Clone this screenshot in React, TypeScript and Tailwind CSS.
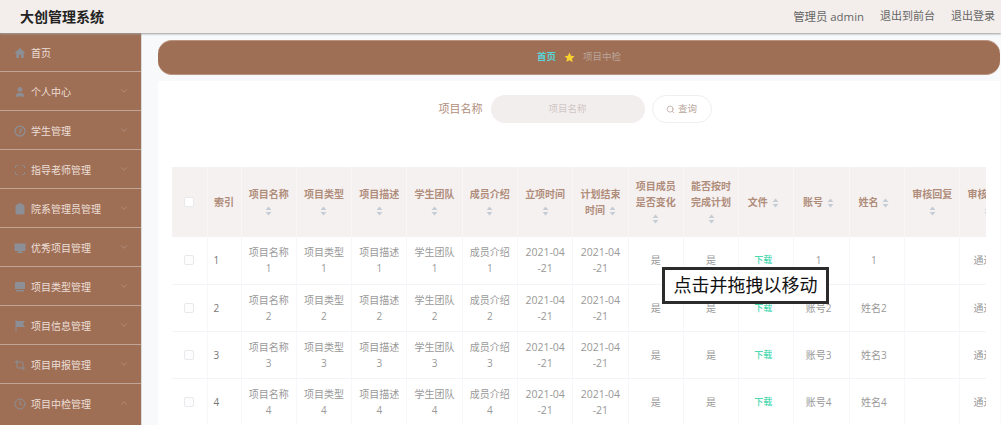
import { ChevronDown, ChevronUp, Clock, Crop, Scan, Search, User, ClipboardX } from "lucide-react";
import type { ComponentType } from "react";

type IconProps = { size?: number; className?: string };

function HomeIcon({ size, className }: IconProps) {
  return (
    <svg width={size} height={size} viewBox="0 0 24 24" className={className}>
      <path d="M12 2 L1 12.5 H4.5 V22 H10 V15.5 H14 V22 H19.5 V12.5 H23 Z" fill="currentColor" />
    </svg>
  );
}

function GaugeIcon({ size, className }: IconProps) {
  return (
    <svg width={size} height={size} viewBox="0 0 24 24" className={className} fill="none" stroke="currentColor" strokeWidth="2.5">
      <circle cx="12" cy="12" r="10" />
      <path d="M11 17 L15 7" />
    </svg>
  );
}

function MonitorIcon({ size, className }: IconProps) {
  return (
    <svg width={size} height={size} viewBox="0 0 24 24" className={className}>
      <path d="M1 3h22v15H1z M9 18h6v2h3v2H6v-2h3z" fill="currentColor" />
    </svg>
  );
}

function ScreenIcon({ size, className }: IconProps) {
  return (
    <svg width={size} height={size} viewBox="0 0 24 24" className={className}>
      <path d="M4 2h16a2 2 0 0 1 2 2v12H2V4a2 2 0 0 1 2-2z M4 18h16v3H4z" fill="currentColor" />
    </svg>
  );
}

function FlagIcon({ size, className }: IconProps) {
  return (
    <svg width={size} height={size} viewBox="0 0 24 24" className={className}>
      <path d="M3 1h2v22H3z M5 2h17l-4 6 4 6H5z" fill="currentColor" />
    </svg>
  );
}

type MenuItem = {
  label: string;
  Icon: ComponentType<any>;
  filled: boolean;
  arrow: boolean;
  open?: boolean;
};

const menu: MenuItem[] = [
  { label: "首页", Icon: HomeIcon, filled: true, arrow: false },
  { label: "个人中心", Icon: User, filled: true, arrow: true },
  { label: "学生管理", Icon: GaugeIcon, filled: false, arrow: true },
  { label: "指导老师管理", Icon: Scan, filled: false, arrow: true },
  { label: "院系管理员管理", Icon: ClipboardX, filled: true, arrow: true },
  { label: "优秀项目管理", Icon: MonitorIcon, filled: true, arrow: true },
  { label: "项目类型管理", Icon: ScreenIcon, filled: true, arrow: true },
  { label: "项目信息管理", Icon: FlagIcon, filled: true, arrow: true },
  { label: "项目申报管理", Icon: Crop, filled: false, arrow: true },
  { label: "项目中检管理", Icon: Clock, filled: false, arrow: true, open: true },
];

const headers = [
  { title: "项目名称", inline: false, shift: false },
  { title: "项目类型", inline: false, shift: false },
  { title: "项目描述", inline: false, shift: false },
  { title: "学生团队", inline: false, shift: false },
  { title: "成员介绍", inline: false, shift: false },
  { title: "立项时间", inline: false, shift: false },
  { title: "计划结束时间", inline: true, shift: false },
  { title: "项目成员是否变化", inline: false, shift: false },
  { title: "能否按时完成计划", inline: false, shift: false },
  { title: "文件", inline: true, shift: true },
  { title: "账号", inline: true, shift: true },
  { title: "姓名", inline: true, shift: true },
  { title: "审核回复", inline: false, shift: false },
  { title: "审核状态", inline: false, shift: false },
];

function SortIcon() {
  return (
    <svg width="7" height="10" viewBox="0 0 7 10" className="inline-block align-middle">
      <path d="M3.5 0.5 L6.5 4 H0.5 Z" fill="#c6ccd6" />
      <path d="M3.5 9.5 L6.5 6 H0.5 Z" fill="#c6ccd6" />
    </svg>
  );
}

function Checkbox({ head }: { head?: boolean }) {
  return <span className={`mx-auto block h-[10px] w-[10px] rounded-[2px] border border-[#e8e9ec] ${head ? "bg-white" : "bg-[#fdfdfd]"}`} />;
}

export default function App() {
  const rows = [1, 2, 3, 4];

  return (
    <div className="relative flex h-[425px] w-[1001px] flex-col overflow-hidden bg-[#f8f9fb] text-[10px] font-['Open_Sans','Noto_Sans_CJK_SC',sans-serif]">
      <header className="z-10 flex h-[33px] shrink-0 items-center justify-between bg-[#f3eeec] pl-[20px] pr-[6px] shadow-[0_1px_2px_#9c9c9c]">
        <h1 className="text-[14px] font-bold text-[#222]">大创管理系统</h1>
        <div className="flex items-center gap-[16px] text-[11px] text-[#666]">
          <span className="text-[11.4px]">管理员 admin</span>
          <span>退出到前台</span>
          <span>退出登录</span>
        </div>
      </header>

      <div className="flex min-h-0 flex-1">
        <aside className="w-[142px] shrink-0 border-r border-[#dedcdb] bg-[#9f6f55]">
          {menu.map(({ label, Icon, filled, arrow, open }, i) => (
            <div
              key={label}
              className={`flex h-[39px] items-center border-b pl-[14px] pr-[12px] pt-[2px] text-[#ecdfd8] ${i === menu.length - 1 ? "border-transparent" : "border-[#c2a596]"}`}
            >
              <Icon size={12} className="mr-[5px] shrink-0 text-[#8c8f96]" fill={filled ? "currentColor" : "none"} />
              <span className="flex-1">{label}</span>
              {arrow && (open ? <ChevronUp size={10} className="mb-[3px] text-[#b48f7c]" /> : <ChevronDown size={10} className="mb-[3px] text-[#b48f7c]" />)}
            </div>
          ))}
        </aside>

        <main className="min-w-0 flex-1 pl-[16px] pr-[1px] pt-[7px]">
          <nav className="flex h-[35px] items-center justify-center gap-[7px] rounded-[14px] border-y border-[#b99481] bg-[#9f6f55] text-[9.5px]">
            <span className="font-bold text-[#58d5d9]">首页</span>
            <svg width="11" height="11" viewBox="0 0 24 24" className="mx-[1px]"><path d="M12 1l3.4 7.2 7.6 1-5.6 5.4 1.5 7.8L12 18l-6.9 3.4 1.5-7.8L1 9.2l7.6-1z" fill="#f8d12f" /></svg>
            <span className="text-[#b9a49a]">项目中检</span>
          </nav>

          <section className="mt-[6px] h-[400px] bg-white pl-[14px] pr-[14px]">
            <div className="flex h-[86px] items-start justify-center pr-[8px] pt-[14px]">
              <label className="mr-[8px] flex h-[28px] items-center text-[11px] text-[#b08d7b]">项目名称</label>
              <div className="flex h-[28px] w-[154px] items-center justify-center rounded-[14px] bg-[#f3eeee] text-[9.5px] text-[#cfc7c5]">项目名称</div>
              <button className="ml-[7px] flex h-[28px] w-[60px] items-center justify-center gap-[3px] rounded-[14px] border border-[#f1eeee] bg-white text-[9.5px] text-[#b9a69c]">
                <Search size={9} />
                查询
              </button>
            </div>

            <div className="overflow-hidden">
              <table className="w-[843px] table-fixed border-collapse text-center text-[#999]">
                <colgroup>
                  <col className="w-[35px]" />
                  <col className="w-[34px]" />
                  {headers.map((h) => (
                    <col key={h.title} className="w-[55.3px]" />
                  ))}
                </colgroup>
                <thead>
                  <tr className="h-[70px] bg-[#f5f1f1] text-[#b08d7b]">
                    <th className="border-r border-[#f8f6f6]"><Checkbox head /></th>
                    <th className="border-r border-[#f8f6f6] font-bold">索引</th>
                    {headers.map((h) => (
                      <th key={h.title} className={`border-r border-[#f8f6f6] pl-[7px] font-bold leading-[16px] ${h.shift ? "pr-[13px]" : "pr-[7px]"}`}>
                        {h.title}
                        {!h.inline && <br />}
                        <span className={h.inline ? "ml-[4px]" : ""}><SortIcon /></span>
                      </th>
                    ))}
                  </tr>
                </thead>
                <tbody>
                  {rows.map((n) => (
                    <tr key={n} className="h-[47px] border-b border-[#f3f4f8] leading-[16px]">
                      <td className="border-r border-[#f6f7fa]"><Checkbox /></td>
                      <td className="border-r border-[#f6f7fa] pl-[6px] text-left text-[#777]">{n}</td>
                      <td className="border-r border-[#f6f7fa] px-[7px]">项目名称{n}</td>
                      <td className="border-r border-[#f6f7fa] px-[7px]">项目类型{n}</td>
                      <td className="border-r border-[#f6f7fa] px-[7px]">项目描述{n}</td>
                      <td className="border-r border-[#f6f7fa] px-[7px]">学生团队{n}</td>
                      <td className="border-r border-[#f6f7fa] px-[7px]">成员介绍{n}</td>
                      <td className="border-r border-[#f6f7fa] px-[2px] text-[10.5px]">2021-04<br />-21</td>
                      <td className="border-r border-[#f6f7fa] px-[2px] text-[10.5px]">2021-04<br />-21</td>
                      <td className="border-r border-[#f6f7fa] px-[7px]">是</td>
                      <td className="border-r border-[#f6f7fa] px-[7px]">是</td>
                      <td className="border-r border-[#f6f7fa] pl-[7px] pr-[13px] text-[9px] font-medium text-[#4ed8b0]">下载</td>
                      <td className="border-r border-[#f6f7fa] pl-[7px] pr-[13px]">{n === 1 ? "1" : `账号${n}`}</td>
                      <td className="border-r border-[#f6f7fa] pl-[7px] pr-[13px]">{n === 1 ? "1" : `姓名${n}`}</td>
                      <td className="border-r border-[#f6f7fa] px-[7px]"></td>
                      <td className="whitespace-nowrap border-r border-[#f6f7fa] pl-[7px] pr-[15px]">通过</td>
                    </tr>
                  ))}
                </tbody>
              </table>
            </div>
          </section>
        </main>
      </div>

      <div className="absolute left-[662px] top-[267px] flex h-[37px] w-[167px] items-center justify-center whitespace-nowrap border-[3px] border-[#2b2b2b] bg-white text-[18px] text-[#111]">
        点击并拖拽以移动
      </div>
    </div>
  );
}
